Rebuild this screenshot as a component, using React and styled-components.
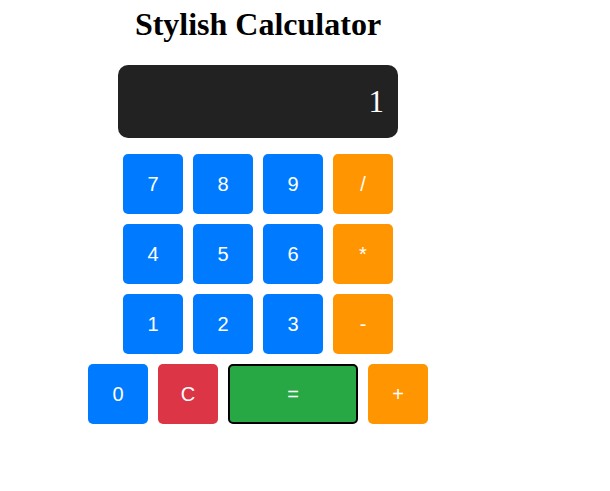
import React, { useState } from 'react';
import styled, { createGlobalStyle } from 'styled-components';

const GlobalStyle = createGlobalStyle`
  body {
    margin: 0;
    background: #ffffff;
  }
`;

const Page = styled.div`
  width: 500px;
  margin-left: 8px;
  display: flex;
  flex-direction: column;
  align-items: center;
`;

const Title = styled.h1`
  font-family: "Liberation Serif", "Times New Roman", serif;
  font-size: 32px;
  font-weight: bold;
  color: #000;
  margin: 6px 0 22px;
`;

const Display = styled.div`
  width: 280px;
  height: 73px;
  box-sizing: border-box;
  background-color: #222222;
  border-radius: 10px;
  color: #ffffff;
  font-family: "Liberation Serif", "Times New Roman", serif;
  font-size: 31px;
  display: flex;
  align-items: center;
  justify-content: flex-end;
  padding: 0 14px;
  margin-bottom: 16px;
`;

const Keys = styled.div`
  display: flex;
  flex-direction: column;
  align-items: center;
  gap: 10px;
`;

const Row = styled.div`
  display: flex;
  gap: 10px;
`;

const colors = {
  num: '#007bff',
  op: '#ff9500',
  clear: '#dc3545',
  equals: '#28a745',
};

const Key = styled.button`
  width: ${(p) => (p.$wide ? '130px' : '60px')};
  height: 60px;
  box-sizing: border-box;
  border: ${(p) => (p.$active ? '2px solid #000' : 'none')};
  border-radius: 5px;
  background-color: ${(p) => colors[p.$kind]};
  color: #ffffff;
  font-family: "Liberation Sans", Arial, sans-serif;
  font-size: 20px;
  cursor: pointer;
  padding: 0;
`;

const rows = [
  [['7', 'num'], ['8', 'num'], ['9', 'num'], ['/', 'op']],
  [['4', 'num'], ['5', 'num'], ['6', 'num'], ['*', 'op']],
  [['1', 'num'], ['2', 'num'], ['3', 'num'], ['-', 'op']],
  [['0', 'num'], ['C', 'clear'], ['=', 'equals'], ['+', 'op']],
];

const App = () => {
  const [value, setValue] = useState('1');

  const handleKey = (k) => {
    if (k === 'C') return setValue('');
    if (k === '=') {
      try {
        // eslint-disable-next-line no-new-func
        setValue(String(Function('return (' + value + ')')()));
      } catch (e) {
        setValue('Error');
      }
      return;
    }
    setValue((v) => v + k);
  };

  return (
    <>
      <GlobalStyle />
      <Page>
        <Title>Stylish Calculator</Title>
        <Display>{value}</Display>
        <Keys>
          {rows.map((row, i) => (
            <Row key={i}>
              {row.map(([label, kind]) => (
                <Key
                  key={label}
                  $kind={kind}
                  $wide={label === '='}
                  $active={label === '='}
                  onClick={() => handleKey(label)}
                >
                  {label}
                </Key>
              ))}
            </Row>
          ))}
        </Keys>
      </Page>
    </>
  );
};

export default App;
